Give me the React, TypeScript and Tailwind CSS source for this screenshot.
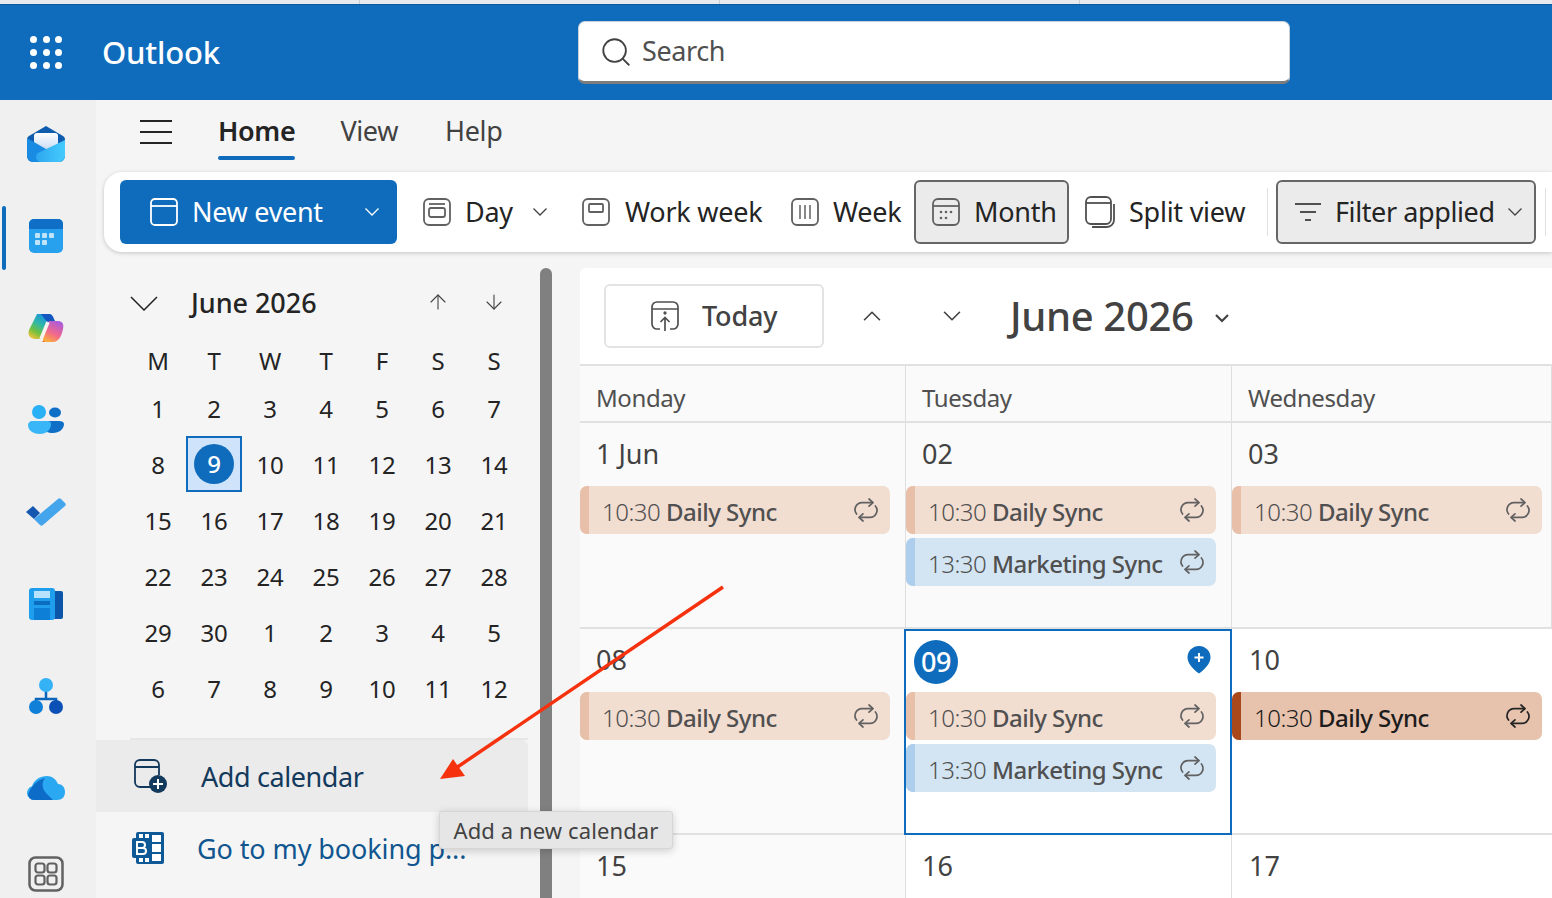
import { ChevronDown, ChevronUp, ArrowUp, ArrowDown, Search } from 'lucide-react'

const weeks = [
  ['1', '2', '3', '4', '5', '6', '7'],
  ['8', '9', '10', '11', '12', '13', '14'],
  ['15', '16', '17', '18', '19', '20', '21'],
  ['22', '23', '24', '25', '26', '27', '28'],
  ['29', '30', '1', '2', '3', '4', '5'],
  ['6', '7', '8', '9', '10', '11', '12'],
]

const Chev = ({ color = '#424242', className }: { color?: string; className?: string }) => (
  <svg width="16" height="10" viewBox="0 0 16 10" fill="none" stroke={color} strokeWidth="1.300" className={`shrink-0 ${className ?? ''}`}>
    <path d="M1.500 1.500L8 8l6.500-6.500" />
  </svg>
)

const RepeatIcon = ({ dark }: { dark?: boolean }) => (
  <svg width="28" height="28" viewBox="0 0 28 28" fill="none" stroke={dark ? '#242424' : '#616161'} strokeWidth="1.700" strokeLinecap="round" strokeLinejoin="round" className="shrink-0">
    <path d="M17 3l4 3.600-4 3.600" />
    <path d="M20.500 6.600H10a7 7 0 0 0-5.400 11.400" />
    <path d="M11 25l-4-3.600 4-3.600" />
    <path d="M7.500 21.400H18a7 7 0 0 0 5.400-11.400" />
  </svg>
)

const EventCard = ({ time, title, kind }: { time: string; title: string; kind: 'peach' | 'blue' | 'active' }) => {
  const bg = kind === 'peach' ? 'bg-[#f2ddd1]' : kind === 'blue' ? 'bg-[#d3e5f3]' : 'bg-[#e7c2ad]'
  const bar = kind === 'peach' ? 'bg-[#e8bfa9]' : kind === 'blue' ? 'bg-[#aeceed]' : 'bg-[#a9481a]'
  const text = kind === 'active' ? 'text-[#1c1c1c]' : 'text-[#505050]'
  return (
    <div className={`flex h-12 w-[310px] items-center overflow-hidden rounded-[7px] ${bg}`}>
      <div className={`h-full w-[9px] shrink-0 ${bar}`} />
      <div className={`ml-[13px] mt-[3px] flex-1 whitespace-nowrap text-[24px] tracking-[-0.5px] ${text}`}>
        <span className="font-light">{time}</span> <span className="font-medium">{title}</span>
      </div>
      <div className="mr-[10px] -mt-[1px]">
        <RepeatIcon dark={kind === 'active'} />
      </div>
    </div>
  )
}

const RailItem = ({ children }: { children: React.ReactNode }) => (
  <div className="flex h-12 w-full items-center justify-center pr-1">{children}</div>
)

const RibbonItem = ({ icon, label, className }: { icon: React.ReactNode; label: string; className?: string }) => (
  <div className={`flex h-16 shrink-0 items-center whitespace-nowrap text-[27px] tracking-[-0.25px] text-[#242424] ${className ?? ''}`}>
    {icon}
    <span>{label}</span>
  </div>
)

const ViewIcon = ({ children }: { children: React.ReactNode }) => (
  <svg width="28" height="28" viewBox="0 0 28 28" fill="none" stroke="#616161" strokeWidth="1.800" className="shrink-0">
    <rect x="1" y="1" width="26" height="26" rx="5" />
    {children}
  </svg>
)

const DayCell = ({ label, today, children }: { label: string; today?: boolean; children?: React.ReactNode }) => (
  <div className={`relative h-[206px] border-r border-b-2 border-r-[#dedede] border-b-[#e1e1e1] ${today ? 'bg-white' : 'bg-[#fafafa]'}`}>
    <div className="flex h-[63px] items-center pl-[16px] text-[27px] text-[#424242]">{label}</div>
    <div className="flex flex-col gap-1">{children}</div>
  </div>
)

export default function App() {
  return (
    <div className="relative flex h-screen w-screen flex-col overflow-hidden bg-[#f5f5f5] font-['Noto_Sans',sans-serif]">
      {/* browser tab strip */}
      <div className="flex h-[5px] shrink-0 border-b border-b-[#0b5a9e] bg-[#e6eaee]">
        <div className="h-full w-[360px] border-r border-r-[#c9cdd1]" />
        <div className="h-full w-[360px] border-r border-r-[#c9cdd1]" />
        <div className="h-full w-[360px] border-r border-r-[#c9cdd1]" />
      </div>

      {/* header */}
      <header className="flex h-[95px] shrink-0 items-center bg-[#0f6cbd] text-white">
        <div className="ml-[30px] grid w-[32px] grid-cols-3 gap-[6px]">
          {Array.from({ length: 9 }).map((_, i) => (
            <span key={i} className="h-[7px] w-[7px] rounded-full bg-white" />
          ))}
        </div>
        <div className="ml-[40px] w-[476px] text-[31px] font-medium tracking-[-0.2px]">Outlook</div>
        <div className="flex h-[63px] w-[712px] items-center rounded-[7px] border border-b-[3px] border-[#c8d0d8] border-b-[#7d7d7d] bg-white pl-[20px] text-[27px] tracking-[-0.4px] text-[#505050]">
          <Search size={34} strokeWidth={1.300} className="text-[#424242]" />
          <span className="ml-[9px]">Search</span>
        </div>
      </header>

      <div className="flex min-h-0 flex-1">
        {/* app rail */}
        <nav className="relative flex w-[96px] shrink-0 flex-col items-center gap-[44px] bg-[#f0f0f0] pt-5">
          <div className="absolute left-[2px] top-[106px] h-16 w-[4px] rounded-full bg-[#0f6cbd]" />
          <RailItem>
            <svg width="38" height="36" viewBox="0 0 38 36">
              <defs>
                <linearGradient id="olPage" x1="0" y1="0" x2="0" y2="1"><stop offset="0" stopColor="#ffffff" /><stop offset="1" stopColor="#c4d8f2" /></linearGradient>
                <linearGradient id="olFront" x1="0" y1="0" x2="1" y2="0"><stop offset="0" stopColor="#2da7ef" /><stop offset="1" stopColor="#45cbfd" /></linearGradient>
              </defs>
              <path d="M19 0l17 10c1.300.800 2 2 2 3.500V30a6 6 0 0 1-6 6H6a6 6 0 0 1-6-6V13.500C0 12 .700 10.800 2 10z" fill="#0f5cae" />
              <rect x="7" y="7" width="24" height="18" rx="3" fill="url(#olPage)" />
              <path d="M0 12l19 11 3 2-8 11H6a6 6 0 0 1-6-6z" fill="#1a8be2" />
              <path d="M38 14v16a6 6 0 0 1-6 6H14a5 5 0 0 1-3-9z" fill="url(#olFront)" />
            </svg>
          </RailItem>
          <RailItem>
            <svg width="34" height="34" viewBox="0 0 34 34">
              <rect width="34" height="34" rx="5" fill="#27a0ee" />
              <path d="M0 10V5a5 5 0 0 1 5-5h24a5 5 0 0 1 5 5v5z" fill="#0f6fc6" />
              {[7, 14, 21].map(x => <rect key={x} x={x - 1} y="14" width="5" height="5" rx="1" fill="#bfe4fc" />)}
              {[7, 14].map(x => <rect key={x} x={x - 1} y="21" width="5" height="5" rx="1" fill="#bfe4fc" />)}
            </svg>
          </RailItem>
          <RailItem>
            <svg width="36" height="28" viewBox="0 0 36 28">
              <defs>
                <linearGradient id="copA" x1="0.700" y1="0" x2="0.200" y2="1"><stop offset="0" stopColor="#1b8fe0" /><stop offset=".4" stopColor="#2fb8a8" /><stop offset=".7" stopColor="#6fc040" /><stop offset="1" stopColor="#f5c33a" /></linearGradient>
                <linearGradient id="copB" x1="0.800" y1="0" x2="0.300" y2="1"><stop offset="0" stopColor="#a85ae0" /><stop offset=".6" stopColor="#f2698a" /><stop offset="1" stopColor="#fbab3f" /></linearGradient>
              </defs>
              <path d="M9 0h13l-6 20c-1 3-3 5-7 5-6 0-10-3-8-9z" fill="url(#copA)" />
              <path d="M13 0h8c3 0 4 2 5 5l2 4h-8z" fill="#1557c0" />
              <path d="M14 28c6 0 9-1 11-5l7-7h-6z" fill="#ef5f3a" />
              <path d="M21 7h9c5 0 6 4 5 8-1 6-4 13-10 13h-6c-3 0-5-2-4-4z" fill="url(#copB)" />
              <path d="M20 8l-7 17" stroke="#f7f4ef" strokeWidth="3.500" />
            </svg>
          </RailItem>
          <RailItem>
            <svg width="36" height="30" viewBox="0 0 36 30">
              <ellipse cx="27" cy="7.500" rx="6" ry="5" fill="#0f6fc6" />
              <path d="M15 16h16c3 0 5 1 5 3 0 5-5 9-11 9-5 0-9-2-10-5z" fill="#0f6fc6" />
              <circle cx="11" cy="7" r="7" fill="#29b0f5" />
              <path d="M4 16h15c3 0 4 1 4 3 0 6-5 10-11 10S0 26 0 20c0-2 2-4 4-4z" fill="#39b6f7" />
            </svg>
          </RailItem>
          <RailItem>
            <svg width="40" height="28" viewBox="0 0 40 28">
              <path d="M0 14l7-6 7 7-6 6z" fill="#1557b0" />
              <path d="M14 27L8 21 32 1c1-1 2-1 3 0l4 4c1 1 1 2 0 3L17 27c-1 1-2 1-3 0z" fill="#45a5ec" />
            </svg>
          </RailItem>
          <RailItem>
            <svg width="34" height="32" viewBox="0 0 34 32">
              <rect x="24" y="3" width="10" height="28" rx="2" fill="#0b56a8" />
              <rect width="26" height="32" rx="3" fill="#1f9eee" />
              <rect x="5" y="3" width="16" height="7" fill="#b6e3fb" />
              <rect x="5" y="13" width="16" height="4" fill="#0b6cc0" />
              <rect x="5" y="20" width="16" height="12" fill="#0d7fd6" />
            </svg>
          </RailItem>
          <RailItem>
            <svg width="34" height="36" viewBox="0 0 34 36">
              <path d="M17 13v8M7 28v-7h20v7" stroke="#0b66bb" strokeWidth="2.500" fill="none" />
              <circle cx="17" cy="7" r="7" fill="#35b2f6" />
              <circle cx="7" cy="29" r="7" fill="#0f7fd8" />
              <circle cx="27" cy="29" r="7" fill="#0b50b5" />
            </svg>
          </RailItem>
          <RailItem>
            <svg width="38" height="24" viewBox="0 0 38 24">
              <path d="M7 24a7 7 0 0 1-2-13.700C7 4 13 0 20 0c5 0 9 3 11 8 4 0 7 3 7 8s-3 8-8 8z" fill="#2ba8f2" />
              <path d="M1 19C4 10 10 4 18 2c-4 5-3 12 3 17l5 5H7c-3 0-5-2-6-5z" fill="#0d6cc8" />
            </svg>
          </RailItem>
          <div className="pr-1">
            <svg width="36" height="36" viewBox="0 0 36 36" fill="none" stroke="#616161">
              <rect x="1.500" y="1.500" width="33" height="33" rx="6" strokeWidth="2.500" />
              <rect x="7.500" y="7.500" width="9" height="9" rx="2.500" strokeWidth="2.200" />
              <rect x="19.500" y="7.500" width="9" height="9" rx="2.500" strokeWidth="2.200" />
              <rect x="7.500" y="19.500" width="9" height="9" rx="2.500" strokeWidth="2.200" />
              <rect x="19.500" y="19.500" width="9" height="9" rx="2.500" strokeWidth="2.200" />
            </svg>
          </div>
        </nav>

        <div className="flex min-w-0 flex-1 flex-col">
          {/* tabs */}
          <div className="flex h-[72px] shrink-0 items-start tracking-[-0.35px]">
            <div className="ml-[44px] mt-[20px] flex w-[32px] flex-col gap-[9px]">
              <span className="h-[2px] bg-[#242424]" />
              <span className="h-[2px] bg-[#242424]" />
              <span className="h-[2px] bg-[#242424]" />
            </div>
            <div className="ml-[46px] mt-[13px] flex flex-col items-center">
              <span className="text-[27px] font-semibold leading-[36px] text-[#242424]">Home</span>
              <span className="mt-[7px] h-1 w-full rounded-full bg-[#0f6cbd]" />
            </div>
            <span className="ml-[45px] mt-[13px] text-[27px] leading-[36px] text-[#424242]">View</span>
            <span className="ml-[47px] mt-[13px] text-[27px] leading-[36px] text-[#424242]">Help</span>
          </div>

          {/* ribbon */}
          <div className="ml-2 flex h-20 shrink-0 items-center rounded-l-[18px] bg-white pl-4 shadow-[0_1px_4px_rgba(0,0,0,0.2)]">
            <div className="flex h-16 w-[277px] shrink-0 items-center rounded-[6px] bg-[#0f6cbd] pl-[30px] text-white">
              <svg width="28" height="28" viewBox="0 0 28 28" fill="none" stroke="white" strokeWidth="1.800" className="shrink-0">
                <rect x="1" y="1" width="26" height="26" rx="4" />
                <path d="M1 8h26" />
              </svg>
              <span className="ml-[14px] w-[172px] text-[27px] tracking-[-0.3px]">New event</span>
              <Chev color="#ffffff" />
            </div>
            <RibbonItem
              className="ml-[26px] w-[109px]"
              label="Day"
              icon={
                <span className="mr-[14px]">
                  <ViewIcon><rect x="6" y="10" width="16" height="9" rx="2" /><path d="M6 6h16" /></ViewIcon>
                </span>
              }
            />
            <Chev />
            <RibbonItem
              className="ml-[34px] w-[180px]"
              label="Work week"
              icon={
                <span className="mr-[15px]">
                  <ViewIcon><rect x="7" y="6" width="14" height="8" rx="1" /></ViewIcon>
                </span>
              }
            />
            <RibbonItem
              className="ml-[29px] w-[110px]"
              label="Week"
              icon={
                <span className="mr-[14px]">
                  <ViewIcon><path d="M9 7v14M14 7v14M19 7v14" strokeWidth="1.500" /></ViewIcon>
                </span>
              }
            />
            <div className="ml-[13px] flex h-16 w-[155px] shrink-0 items-center rounded-[6px] border-2 border-[#666666] bg-[#ebebeb] pl-[16px] text-[27px] tracking-[-0.25px] text-[#242424]">
              <ViewIcon>
                <path d="M1 8h26" />
                {[9, 14, 19].map(x => <circle key={x} cx={x} cy="14" r="1.300" fill="#616161" stroke="none" />)}
                {[9, 14].map(x => <circle key={x} cx={x} cy="20" r="1.300" fill="#616161" stroke="none" />)}
              </ViewIcon>
              <span className="ml-[14px]">Month</span>
            </div>
            <div className="ml-[16px] flex h-16 w-[182px] shrink-0 items-center text-[27px] tracking-[-0.25px] text-[#242424]">
              <svg width="30" height="32" viewBox="0 0 30 32" fill="none" stroke="#505050" strokeWidth="1.800" className="mr-[14px] shrink-0">
                <rect x="1" y="1" width="25" height="27" rx="5" />
                <path d="M1 7h25" />
                <path d="M29 8v16a7 7 0 0 1-7 7H7" />
              </svg>
              <span>Split view</span>
            </div>
            <div className="h-12 w-px shrink-0 bg-[#e0e0e0]" />
            <div className="ml-[8px] flex h-16 w-[260px] shrink-0 items-center rounded-[6px] border-2 border-[#666666] bg-[#ebebeb] pl-[16px] text-[27px] tracking-[-0.4px] text-[#242424]">
              <svg width="28" height="20" viewBox="0 0 28 20" fill="none" stroke="#505050" strokeWidth="1.800" className="shrink-0">
                <path d="M1 2h26M6 10h16M11 18h6" />
              </svg>
              <span className="ml-[13px] w-[172px]">Filter applied</span>
              <Chev />
            </div>
            <div className="ml-[9px] h-12 w-px shrink-0 bg-[#e0e0e0]" />
          </div>

          <div className="mt-4 flex min-h-0 flex-1">
            {/* left pane */}
            <aside className="flex w-[432px] shrink-0 flex-col">
              <div className="flex h-[70px] items-center pl-[34px]">
                <svg width="28" height="15" viewBox="0 0 28 15" fill="none" stroke="#242424" strokeWidth="1.500" className="shrink-0">
                  <path d="M1 1l13 13L27 1" />
                </svg>
                <span className="ml-[33px] w-[235px] text-[27px] font-medium tracking-[-0.05px] text-[#242424]">June 2026</span>
                <ArrowUp size={24} strokeWidth={1.100} className="-mt-[2px] text-[#424242]" />
                <ArrowDown size={24} strokeWidth={1.100} className="-mt-[2px] ml-[32px] text-[#424242]" />
              </div>
              <div className="grid grid-cols-7 pl-[34px] pr-[6px] text-[24px] tracking-[-0.2px] text-[#242424]">
                {['M', 'T', 'W', 'T', 'F', 'S', 'S'].map((d, i) => (
                  <div key={i} className="flex h-[42px] items-end justify-center pb-[2px] leading-[34px]">{d}</div>
                ))}
                {weeks.flat().map((d, i) => (
                  <div key={i} className="flex h-14 items-center justify-center">
                    {i === 8 ? (
                      <div className="flex h-14 w-14 items-center justify-center border-2 border-[#0f6cbd] bg-[#cfe4fa]">
                        <span className="flex h-10 w-10 items-center justify-center rounded-full bg-[#0f6cbd] font-medium text-white">{d}</span>
                      </div>
                    ) : (
                      <span className="mt-[2px]">{d}</span>
                    )}
                  </div>
                ))}
              </div>
              <div className="ml-[34px] mt-[22px] h-[2px] bg-[#e6e6e6]" />
              <div className="flex h-[72px] shrink-0 items-center rounded-tr-[6px] bg-[#ebebeb] pl-[38px] text-[27px] tracking-[-0.4px] text-[#13395c]">
                <svg width="34" height="34" viewBox="0 0 34 34" fill="none" className="shrink-0">
                  <path d="M16 28H6a5 5 0 0 1-5-5V6a5 5 0 0 1 5-5h14a5 5 0 0 1 5 5v10M1 8h24" stroke="#13395c" strokeWidth="1.800" />
                  <circle cx="24" cy="25" r="9" fill="#13395c" />
                  <path d="M24 20v10M19 25h10" stroke="white" strokeWidth="2" />
                </svg>
                <span className="ml-[33px] mt-[3px]">Add calendar</span>
              </div>
              <div className="flex h-[72px] shrink-0 items-center pl-[36px] text-[27px] tracking-[-0.1px] text-[#11568f]">
                <svg width="32" height="32" viewBox="0 0 32 32" className="shrink-0">
                  <rect x="4" y="0" width="28" height="32" rx="2" fill="#0f5a96" />
                  {[7, 13].map(x => <rect key={x} x={x} y="2" width="4" height="4" fill="white" />)}
                  {[7, 13].map(x => <rect key={x} x={x} y="26" width="4" height="4" fill="white" />)}
                  <rect x="20" y="3" width="9" height="7" fill="white" />
                  <rect x="20" y="12" width="9" height="8" fill="white" />
                  <rect x="20" y="22" width="9" height="7" fill="white" />
                  <rect x="0" y="6" width="18" height="20" rx="2" fill="#0f5a96" />
                  <path d="M5 10h5a3 3 0 0 1 0 6H5zM5 16h6a3 3 0 0 1 0 6H5z" fill="none" stroke="white" strokeWidth="2" />
                </svg>
                <span className="ml-[33px] mt-[3px] whitespace-nowrap">Go to my booking p...</span>
              </div>
            </aside>

            {/* scrollbar */}
            <div className="ml-3 w-3 shrink-0 rounded-t-full bg-[#808080]" />

            {/* calendar surface */}
            <main className="ml-[28px] flex min-w-0 flex-1 flex-col rounded-tl-[6px] bg-white">
              <div className="flex h-[98px] shrink-0 items-center border-b-2 border-b-[#e1e1e1] pl-6">
                <div className="flex h-16 w-[220px] items-center rounded-[6px] border-2 border-[#e3e3e3] pl-[45px] text-[27px] font-medium tracking-[-0.2px] text-[#424242]">
                  <svg width="28" height="30" viewBox="0 0 28 30" fill="none" stroke="#505050" strokeWidth="1.700" className="shrink-0">
                    <path d="M9 28H6a5 5 0 0 1-5-5V6a5 5 0 0 1 5-5h16a5 5 0 0 1 5 5v17a5 5 0 0 1-5 5h-3M1 8h26" />
                    <path d="M14 30V17M9.500 21l4.500-4.500 4.500 4.500" />
                    <circle cx="14" cy="12" r=".800" fill="#505050" />
                  </svg>
                  <span className="ml-[23px]">Today</span>
                </div>
                <ChevronUp size={30} strokeWidth={1.300} className="ml-[33px] text-[#424242]" />
                <ChevronDown size={30} strokeWidth={1.300} className="ml-[50px] text-[#424242]" />
                <span className="ml-[43px] w-[204px] text-[40px] font-medium tracking-[-0.35px] text-[#424242]">June 2026</span>
                <svg width="16" height="10" viewBox="0 0 16 10" fill="none" stroke="#424242" strokeWidth="2.200" className="mt-[4px] shrink-0">
                  <path d="M2 2l6 6 6-6" />
                </svg>
              </div>

              <div className="grid min-h-0 flex-1 grid-cols-[326px_326px_320px] content-start">
                {['Monday', 'Tuesday', 'Wednesday'].map(d => (
                  <div key={d} className="flex h-[57px] items-center border-r border-b-2 border-r-[#dedede] border-b-[#e1e1e1] bg-[#fafafa] pl-[16px] pt-[8px] text-[24px] tracking-[-0.4px] text-[#505050]">{d}</div>
                ))}
                <DayCell label="1 Jun"><EventCard time="10:30" title="Daily Sync" kind="peach" /></DayCell>
                <DayCell label="02">
                  <EventCard time="10:30" title="Daily Sync" kind="peach" />
                  <EventCard time="13:30" title="Marketing Sync" kind="blue" />
                </DayCell>
                <DayCell label="03"><EventCard time="10:30" title="Daily Sync" kind="peach" /></DayCell>
                <DayCell label="08"><EventCard time="10:30" title="Daily Sync" kind="peach" /></DayCell>
                <div className="relative -ml-[2px] h-[206px] w-[328px] border-2 border-[#0f6cbd] bg-white">
                  <div className="flex h-[61px] items-start justify-between pl-[8px] pr-[19px] pt-[9px]">
                    <span className="flex h-11 w-11 items-center justify-center rounded-full bg-[#0f6cbd] text-[27px] font-medium tracking-[-0.5px] text-white">09</span>
                    <svg width="24" height="28" viewBox="0 0 24 28" className="mt-[6px]">
                      <path d="M12 0a11.500 11.500 0 0 1 11.500 11.500c0 6-6 12-11.500 16C6.500 23.500.500 17.500.500 11.500A11.500 11.500 0 0 1 12 0z" fill="#0f6cbd" />
                      <path d="M12 7v9M7.500 11.500h9" stroke="white" strokeWidth="2" />
                    </svg>
                  </div>
                  <div className="flex flex-col gap-1">
                    <EventCard time="10:30" title="Daily Sync" kind="peach" />
                    <EventCard time="13:30" title="Marketing Sync" kind="blue" />
                  </div>
                </div>
                <div className="h-[206px] border-b-2 border-b-[#e1e1e1] bg-white">
                  <div className="flex h-[63px] items-center pl-[17px] text-[27px] text-[#424242]">10</div>
                  <EventCard time="10:30" title="Daily Sync" kind="active" />
                </div>
                <div className="flex h-[63px] items-center border-r border-r-[#dedede] bg-[#fafafa] pl-[16px] text-[27px] text-[#424242]">15</div>
                <div className="flex h-[63px] items-center border-r border-r-[#dedede] bg-white pl-[16px] text-[27px] text-[#424242]">16</div>
                <div className="flex h-[63px] items-center bg-white pl-[17px] text-[27px] text-[#424242]">17</div>
              </div>
            </main>
          </div>
        </div>
      </div>

      {/* tooltip over the pane */}
      <div className="absolute left-[439px] top-[811px] flex h-[38px] w-[234px] items-center justify-center rounded-[3px] border border-[#d6d6d6] bg-[#e6e6e6] text-[22px] tracking-[0.1px] text-[#424242] shadow-[0_2px_8px_rgba(0,0,0,0.18)]">
        Add a new calendar
      </div>

      {/* red annotation arrow */}
      <svg className="pointer-events-none absolute left-0 top-0" width="1552" height="898" viewBox="0 0 1552 898">
        <path d="M723 587L456 768" stroke="#f5310e" strokeWidth="3.500" fill="none" />
        <path d="M440 779L453 759 465 776z" fill="#f5310e" />
      </svg>
    </div>
  )
}
